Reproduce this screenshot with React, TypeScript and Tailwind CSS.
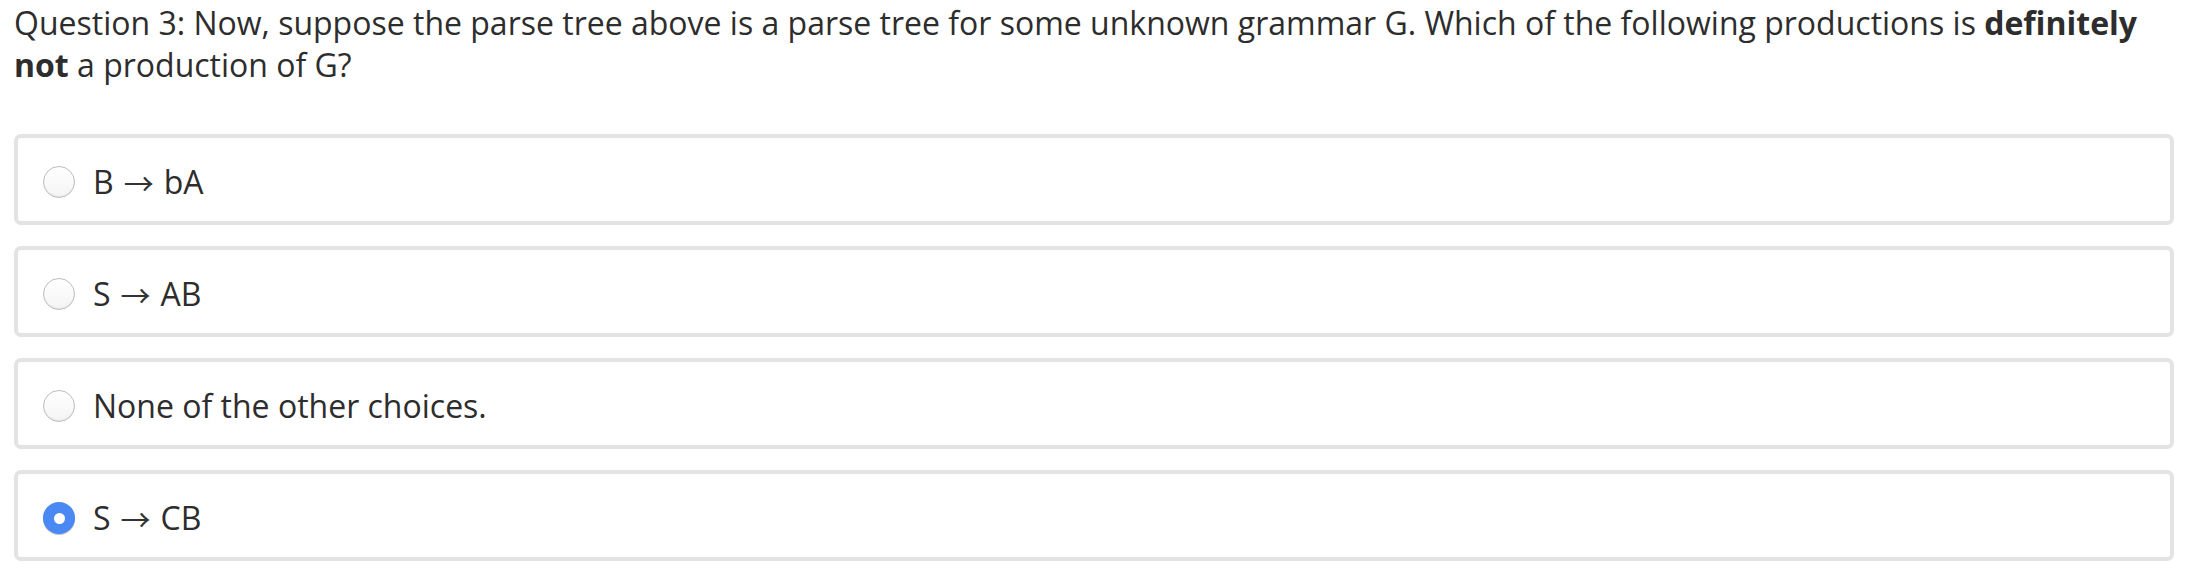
import React from "react";

const options = [
  { lhs: "B", rhs: "bA", checked: false },
  { lhs: "S", rhs: "AB", checked: false },
  { text: "None of the other choices.", checked: false },
  { lhs: "S", rhs: "CB", checked: true },
];

function Radio({ checked }: { checked: boolean }) {
  if (checked) {
    return (
      <div className="w-[32px] h-[32px] rounded-full bg-[#4a89f3] flex items-center justify-center shrink-0 shadow-[0_1px_1px_rgba(0,0,0,0.25)]">
        <div className="w-[11px] h-[11px] rounded-full bg-white" />
      </div>
    );
  }
  return (
    <div className="w-[32px] h-[32px] rounded-full border-[1.5px] border-[#bdbdbd] bg-gradient-to-b from-white to-[#f4f4f4] shrink-0 shadow-[inset_0_-1px_1px_rgba(0,0,0,0.06)]" />
  );
}

export default function App() {
  return (
    <div
      className="w-[2188px] h-[574px] bg-white px-[14px] pt-[2px] text-[#2d2d2d]"
      style={{ fontFamily: '"Open Sans", "Liberation Sans", sans-serif' }}
    >
      <p className="text-[32px] leading-[42px] w-[2140px]">
        Question 3: Now, suppose the parse tree above is a parse tree for some unknown grammar G. Which of the following productions is{" "}
        <b className="font-bold">definitely</b>
        <br />
        <b className="font-bold">not</b> a production of G?
      </p>
      <div className="mt-[48px] flex flex-col gap-[21px]">
        {options.map((o, i) => (
          <div
            key={i}
            className="h-[91px] border-[4px] border-[#e3e3e3] rounded-[7px] bg-white flex items-center pl-[25px] pt-[5px]"
          >
            <Radio checked={o.checked} />
            {o.text ? (
              <span className="ml-[18px] text-[32px] leading-[40px]">{o.text}</span>
            ) : (
              <span className="ml-[18px] text-[32px] leading-[40px] flex items-center">
                <span>{o.lhs}</span>
                <span
                  className="mx-[10px] text-[30px] leading-[40px] text-[#333]"
                  style={{ fontFamily: '"Noto Sans CJK SC", "DejaVu Sans", sans-serif' }}
                >
                  →
                </span>
                <span>{o.rhs}</span>
              </span>
            )}
          </div>
        ))}
      </div>
    </div>
  );
}
